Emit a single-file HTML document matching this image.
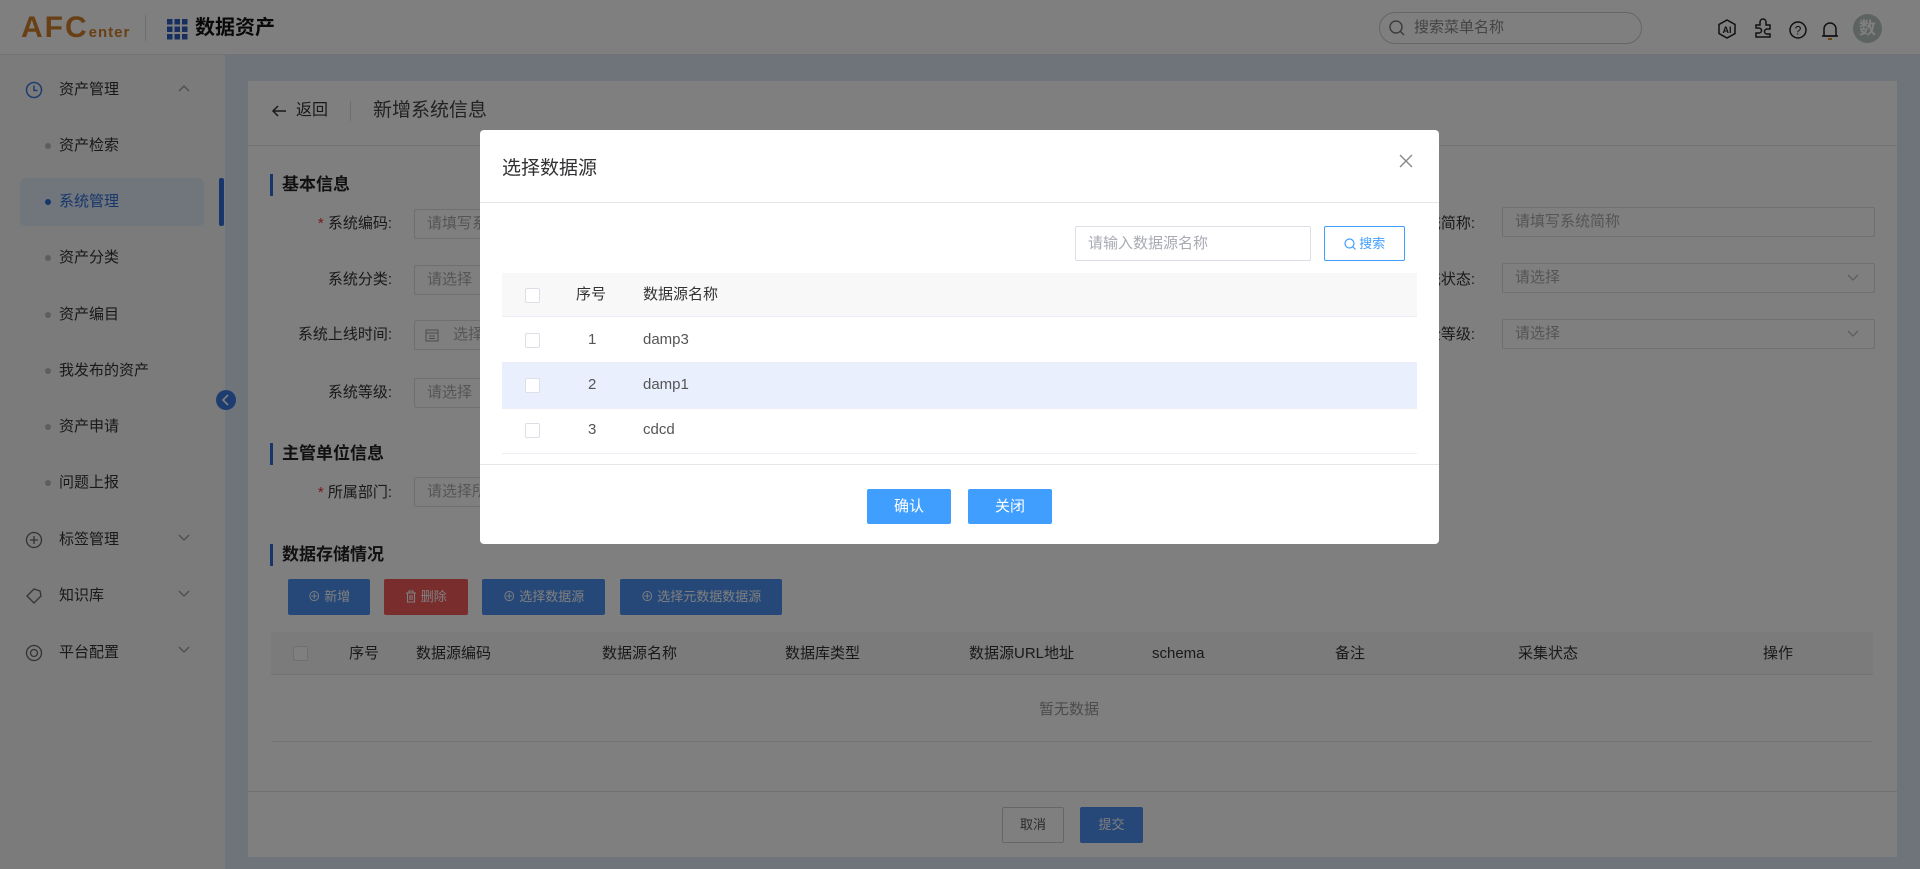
<!DOCTYPE html>
<html><head><meta charset="utf-8">
<style>
*{margin:0;padding:0;box-sizing:border-box}
body{width:1920px;height:869px;overflow:hidden;position:relative;background:#dfe9f7;font-family:"Liberation Sans","Noto Sans CJK SC",sans-serif;color:#333;font-size:15px;line-height:20px}
.a{position:absolute;white-space:nowrap}
.hdr{left:0;top:0;width:1920px;height:55px;background:#fff;border-bottom:1px solid #e4e4e4}
.side{left:0;top:55px;width:225px;height:814px;background:#f6f6f6}
.card{left:248px;top:81px;width:1649px;height:776px;background:#fff}
.lbl{text-align:right;width:200px;font-size:15px;color:#333;line-height:20px}
.inp{height:30px;border:1px solid #dcdfe6;border-radius:2px;background:#fff;color:#aaa;font-size:15px;line-height:28px;padding-left:12px}
.h3{font-weight:bold;font-size:17px;color:#222;line-height:22px;padding-left:9px;border-left:3px solid #2f6fd8}
.btn{height:36px;border-radius:2px;color:#fff;font-size:13px;line-height:36px;text-align:center}
.mi{font-size:15px;color:#333;line-height:20px}
.dot{width:6px;height:6px;border-radius:3px;background:#bbb}
.mask{left:0;top:0;width:1920px;height:869px;background:rgba(0,0,0,.5)}
.dlg{left:480px;top:130px;width:959px;height:414px;background:#fff;border-radius:4px}
.cb{width:15px;height:15px;border:1px solid #dcdfe6;border-radius:2px;background:#fff}
</style></head><body>
<div class="a hdr"></div>
<div class="a" style="left:21px;top:11px;font-size:30px;line-height:34px;font-weight:bold;color:#d2802a;letter-spacing:2px;font-family:'Liberation Sans',sans-serif">AFC<span style="font-size:15px;letter-spacing:1px">enter</span></div>
<div class="a" style="left:145px;top:15px;width:1px;height:26px;background:#ddd"></div>
<svg class="a" style="left:167px;top:19px" width="21" height="21"><g fill="#2f5fbf"><rect x="0" y="0" width="5.5" height="5.5"/><rect x="7.5" y="0" width="5.5" height="5.5"/><rect x="15" y="0" width="5.5" height="5.5"/><rect x="0" y="7.5" width="5.5" height="5.5"/><rect x="7.5" y="7.5" width="5.5" height="5.5"/><rect x="15" y="7.5" width="5.5" height="5.5"/><rect x="0" y="15" width="5.5" height="5.5"/><rect x="7.5" y="15" width="5.5" height="5.5"/><rect x="15" y="15" width="5.5" height="5.5"/></g></svg>
<div class="a" style="left:195px;top:16px;font-size:20px;line-height:24px;font-weight:bold;color:#111">数据资产</div>
<div class="a" style="left:1379px;top:12px;width:263px;height:32px;border:1px solid #ccc;border-radius:16px;background:#fff"></div>
<svg class="a" style="left:1388px;top:19px" width="18" height="18"><circle cx="8" cy="8" r="6" fill="none" stroke="#777" stroke-width="1.4"/><path d="M12.5 12.5L16 16" stroke="#777" stroke-width="1.4"/></svg>
<div class="a" style="left:1414px;top:18px;font-size:15px;color:#888">搜索菜单名称</div>
<svg class="a" style="left:1716px;top:18px" width="22" height="22"><path d="M11 2L19 6.5V15.5L11 20L3 15.5V6.5Z" fill="none" stroke="#222" stroke-width="1.5"/><text x="11" y="15" font-size="9" text-anchor="middle" font-family="Liberation Sans" font-weight="bold" fill="#222">AI</text></svg>
<svg class="a" style="left:1752px;top:17px" width="22" height="22"><path d="M4 8H8V5A3 3 0 0 1 14 5V8H18V12H15A2.5 2.5 0 0 0 15 17H18V20H4V16H7A2.5 2.5 0 0 0 7 11H4Z" fill="none" stroke="#222" stroke-width="1.5"/></svg>
<svg class="a" style="left:1788px;top:20px" width="20" height="20"><circle cx="10" cy="10" r="8" fill="none" stroke="#222" stroke-width="1.5"/><text x="10" y="14.5" font-size="12" text-anchor="middle" fill="#222" font-family="Liberation Sans">?</text></svg>
<svg class="a" style="left:1820px;top:19px" width="20" height="22"><path d="M4 17V10A6 6 0 0 1 16 10V17Z" fill="none" stroke="#222" stroke-width="1.5"/><path d="M2 17H18" stroke="#222" stroke-width="1.5"/><path d="M8 20H12" stroke="#d88a20" stroke-width="2"/></svg>
<div class="a" style="left:1853px;top:14px;width:29px;height:29px;border-radius:15px;background:#b8c6c0;color:#fff;font-size:17px;line-height:29px;text-align:center;font-weight:bold">数</div>

<div class="a side"></div>
<svg class="a" style="left:25px;top:81px" width="18" height="18"><circle cx="9" cy="9" r="7.5" fill="none" stroke="#3a7be0" stroke-width="1.5"/><path d="M9 4.5V9.5H12.5" fill="none" stroke="#3a7be0" stroke-width="1.5"/></svg>
<div class="a mi" style="left:59px;top:80px">资产管理</div>
<svg class="a" style="left:178px;top:84px" width="12" height="8"><path d="M1 7L6 2L11 7" fill="none" stroke="#999" stroke-width="1.3"/></svg>
<div class="a dot" style="left:45px;top:143px"></div><div class="a mi" style="left:59px;top:136px">资产检索</div>
<div class="a" style="left:20px;top:178px;width:184px;height:48px;background:#e3ebf8;border-radius:5px"></div>
<div class="a" style="left:219px;top:178px;width:5px;height:48px;background:#2f6fd8;border-radius:2px"></div>
<div class="a dot" style="left:45px;top:199px;background:#2f6fd8"></div><div class="a mi" style="left:59px;top:192px;color:#2f6fd8">系统管理</div>
<div class="a dot" style="left:45px;top:255px"></div><div class="a mi" style="left:59px;top:248px">资产分类</div>
<div class="a dot" style="left:45px;top:312px"></div><div class="a mi" style="left:59px;top:305px">资产编目</div>
<div class="a dot" style="left:45px;top:368px"></div><div class="a mi" style="left:59px;top:361px">我发布的资产</div>
<div class="a dot" style="left:45px;top:424px"></div><div class="a mi" style="left:59px;top:417px">资产申请</div>
<div class="a dot" style="left:45px;top:480px"></div><div class="a mi" style="left:59px;top:473px">问题上报</div>
<svg class="a" style="left:25px;top:531px" width="18" height="18"><circle cx="9" cy="9" r="7.5" fill="none" stroke="#666" stroke-width="1.3"/><path d="M9 5V13M5 9H13" stroke="#666" stroke-width="1.3"/></svg>
<div class="a mi" style="left:59px;top:530px">标签管理</div>
<svg class="a" style="left:178px;top:534px" width="12" height="8"><path d="M1 1L6 6L11 1" fill="none" stroke="#999" stroke-width="1.3"/></svg>
<svg class="a" style="left:25px;top:587px" width="18" height="18"><path d="M2 9L9 2L15 4L16 9L9 16Z" fill="none" stroke="#666" stroke-width="1.3"/></svg>
<div class="a mi" style="left:59px;top:586px">知识库</div>
<svg class="a" style="left:178px;top:590px" width="12" height="8"><path d="M1 1L6 6L11 1" fill="none" stroke="#999" stroke-width="1.3"/></svg>
<svg class="a" style="left:25px;top:644px" width="18" height="18"><circle cx="9" cy="9" r="7.5" fill="none" stroke="#666" stroke-width="1.3"/><circle cx="9" cy="9" r="3.5" fill="none" stroke="#666" stroke-width="1.3"/></svg>
<div class="a mi" style="left:59px;top:643px">平台配置</div>
<svg class="a" style="left:178px;top:646px" width="12" height="8"><path d="M1 1L6 6L11 1" fill="none" stroke="#999" stroke-width="1.3"/></svg>
<div class="a" style="left:216px;top:390px;width:20px;height:20px;border-radius:10px;background:#3a7be0"></div>
<svg class="a" style="left:216px;top:390px" width="20" height="20"><path d="M12 5L7 10L12 15" fill="none" stroke="#fff" stroke-width="1.6"/></svg>

<div class="a card"></div>
<svg class="a" style="left:271px;top:104px" width="16" height="14"><path d="M15 7H2M7 2L2 7L7 12" fill="none" stroke="#333" stroke-width="1.5"/></svg>
<div class="a" style="left:296px;top:101px;font-size:16px;color:#333">返回</div>
<div class="a" style="left:350px;top:101px;width:1px;height:20px;background:#ddd"></div>
<div class="a" style="left:373px;top:100px;font-size:19px;line-height:22px;color:#444">新增系统信息</div>
<div class="a" style="left:248px;top:145px;width:1649px;height:1px;background:#e8e8e8"></div>

<div class="a h3" style="left:270px;top:174px">基本信息</div>
<div class="a lbl" style="left:192px;top:214px"><span style="color:#e33">* </span>系统编码:</div>
<div class="a inp" style="left:414px;top:209px;width:400px">请填写系统编码</div>
<div class="a lbl" style="left:192px;top:270px">系统分类:</div>
<div class="a inp" style="left:414px;top:265px;width:400px">请选择</div>
<div class="a lbl" style="left:192px;top:325px">系统上线时间:</div>
<div class="a inp" style="left:414px;top:320px;width:400px;padding-left:38px">选择日期</div>
<svg class="a" style="left:425px;top:328px" width="14" height="14"><rect x="1" y="2" width="12" height="11" fill="none" stroke="#999"/><path d="M1 5H13M4 8H10M4 10.5H10" stroke="#999"/></svg>
<div class="a lbl" style="left:192px;top:383px">系统等级:</div>
<div class="a inp" style="left:414px;top:378px;width:400px">请选择</div>

<div class="a lbl" style="left:1275px;top:214px">系统简称:</div>
<div class="a inp" style="left:1502px;top:207px;width:373px">请填写系统简称</div>
<div class="a lbl" style="left:1275px;top:270px">系统状态:</div>
<div class="a inp" style="left:1502px;top:263px;width:373px">请选择</div>
<svg class="a" style="left:1847px;top:274px" width="12" height="8"><path d="M1 1L6 6L11 1" fill="none" stroke="#bbb" stroke-width="1.3"/></svg>
<div class="a lbl" style="left:1275px;top:325px">安全等级:</div>
<div class="a inp" style="left:1502px;top:319px;width:373px">请选择</div>
<svg class="a" style="left:1847px;top:330px" width="12" height="8"><path d="M1 1L6 6L11 1" fill="none" stroke="#bbb" stroke-width="1.3"/></svg>

<div class="a h3" style="left:270px;top:443px">主管单位信息</div>
<div class="a lbl" style="left:192px;top:483px"><span style="color:#e33">* </span>所属部门:</div>
<div class="a inp" style="left:414px;top:477px;width:400px">请选择所属部门</div>

<div class="a h3" style="left:270px;top:544px">数据存储情况</div>
<div class="a btn" style="left:288px;top:579px;width:82px;background:#4c90f0">⊕ 新增</div>
<div class="a btn" style="left:384px;top:579px;width:84px;background:#f25a5a"><svg style="vertical-align:-2px" width="12" height="13"><path d="M1 3H11M4 3V1H8V3M2.5 3V12H9.5V3M5 5V10M7 5V10" fill="none" stroke="#fff" stroke-width="1.1"/></svg> 删除</div>
<div class="a btn" style="left:482px;top:579px;width:123px;background:#4c90f0">⊕ 选择数据源</div>
<div class="a btn" style="left:620px;top:579px;width:162px;background:#4c90f0">⊕ 选择元数据数据源</div>
<div class="a" style="left:271px;top:632px;width:1602px;height:43px;background:#f7f7f7;border-bottom:1px solid #e8e8e8"></div>
<div class="a cb" style="left:293px;top:646px"></div>
<div class="a" style="left:349px;top:644px">序号</div>
<div class="a" style="left:416px;top:644px">数据源编码</div>
<div class="a" style="left:602px;top:644px">数据源名称</div>
<div class="a" style="left:785px;top:644px">数据库类型</div>
<div class="a" style="left:969px;top:644px">数据源URL地址</div>
<div class="a" style="left:1152px;top:644px">schema</div>
<div class="a" style="left:1335px;top:644px">备注</div>
<div class="a" style="left:1518px;top:644px">采集状态</div>
<div class="a" style="left:1763px;top:644px">操作</div>
<div class="a" style="left:1039px;top:700px;color:#999">暂无数据</div>
<div class="a" style="left:271px;top:741px;width:1602px;height:1px;background:#e8e8e8"></div>
<div class="a" style="left:248px;top:791px;width:1649px;height:1px;background:#e4e4e4"></div>
<div class="a btn" style="left:1002px;top:807px;width:62px;background:#fff;border:1px solid #ccc;color:#555;line-height:34px">取消</div>
<div class="a btn" style="left:1080px;top:807px;width:63px;background:#4c90f0">提交</div>

<div class="a mask"></div>

<div class="a dlg"></div>
<div class="a" style="left:502px;top:158px;font-size:19px;line-height:22px;color:#303133">选择数据源</div>
<svg class="a" style="left:1398px;top:153px" width="16" height="16"><path d="M2 2L14 14M14 2L2 14" stroke="#888" stroke-width="1.4"/></svg>
<div class="a" style="left:480px;top:202px;width:959px;height:1px;background:#e6e6e6"></div>
<div class="a inp" style="left:1075px;top:226px;width:236px;height:35px;line-height:33px;color:#a8abb2">请输入数据源名称</div>
<div class="a" style="left:1324px;top:226px;width:81px;height:35px;border:1px solid #409eff;border-radius:2px;color:#409eff;font-size:13px;line-height:33px;text-align:center">
<svg style="vertical-align:-2px" width="12" height="12"><circle cx="5.5" cy="5.5" r="4.5" fill="none" stroke="#409eff" stroke-width="1.2"/><path d="M9 9L11.5 11.5" stroke="#409eff" stroke-width="1.2"/></svg> 搜索</div>
<div class="a" style="left:502px;top:273px;width:915px;height:44px;background:#f8f8f8;border-bottom:1px solid #ebeef5"></div>
<div class="a cb" style="left:525px;top:288px"></div>
<div class="a" style="left:576px;top:285px;color:#333">序号</div>
<div class="a" style="left:643px;top:285px;color:#333">数据源名称</div>
<div class="a" style="left:502px;top:362px;width:915px;height:46px;background:#e9effd"></div>
<div class="a" style="left:502px;top:362px;width:915px;height:1px;background:#ebeef5"></div>
<div class="a" style="left:502px;top:408px;width:915px;height:1px;background:#ebeef5"></div>
<div class="a" style="left:502px;top:453px;width:915px;height:1px;background:#ebeef5"></div>
<div class="a cb" style="left:525px;top:333px"></div><div class="a" style="left:588px;top:330px;color:#555">1</div><div class="a" style="left:643px;top:330px;color:#555">damp3</div>
<div class="a cb" style="left:525px;top:378px"></div><div class="a" style="left:588px;top:375px;color:#555">2</div><div class="a" style="left:643px;top:375px;color:#555">damp1</div>
<div class="a cb" style="left:525px;top:423px"></div><div class="a" style="left:588px;top:420px;color:#555">3</div><div class="a" style="left:643px;top:420px;color:#555">cdcd</div>
<div class="a" style="left:480px;top:464px;width:959px;height:1px;background:#e6e6e6"></div>
<div class="a btn" style="left:867px;top:489px;width:84px;height:35px;line-height:35px;background:#409eff;font-size:15px">确认</div>
<div class="a btn" style="left:968px;top:489px;width:84px;height:35px;line-height:35px;background:#409eff;font-size:15px">关闭</div>
</body></html>
